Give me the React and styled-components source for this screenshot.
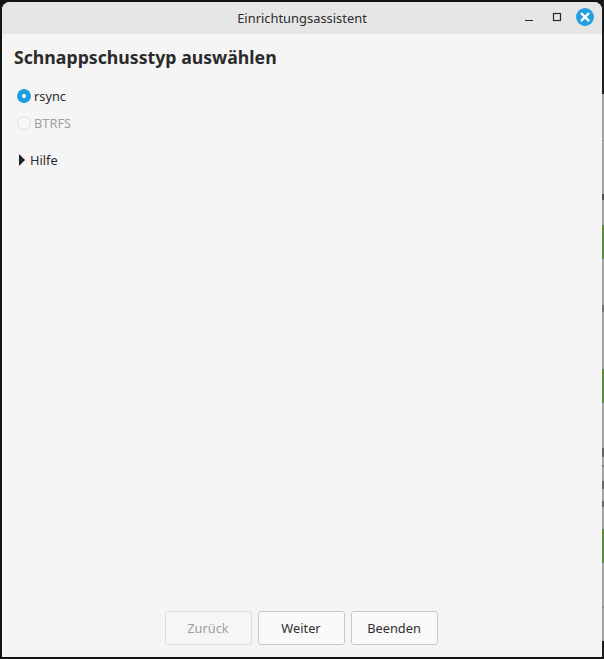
import React from "react";
import styled, { createGlobalStyle } from "styled-components";

const stripSegments = [
  { h: 94, c: "#1d1d1d" },
  { h: 46, c: "#a3a3a3" },
  { h: 1, c: "#8c8c8c" },
  { h: 53, c: "#a3a3a3" },
  { h: 6, c: "#555" },
  { h: 25, c: "#a3a3a3" },
  { h: 34, c: "#5b8f3c" },
  { h: 46, c: "#a3a3a3" },
  { h: 7, c: "#777" },
  { h: 57, c: "#a3a3a3" },
  { h: 34, c: "#5b8f3c" },
  { h: 45, c: "#a3a3a3" },
  { h: 9, c: "#666" },
  { h: 8, c: "#a3a3a3" },
  { h: 2, c: "#777" },
  { h: 14, c: "#a3a3a3" },
  { h: 8, c: "#666" },
  { h: 12, c: "#a3a3a3" },
  { h: 6, c: "#666" },
  { h: 22, c: "#a3a3a3" },
  { h: 34, c: "#5b8f3c" },
  { h: 43, c: "#a3a3a3" },
  { h: 2, c: "#8c8c8c" },
  { h: 33, c: "#a3a3a3" },
  { h: 18, c: "#1d1d1d" },
];

const App = () => {
  return (
    <Desktop>
      <GlobalStyle />
      <Window>
        <TitleBar>
          <WindowTitle>Einrichtungsassistent</WindowTitle>
          <WindowControls>
            <ControlButton aria-label="Minimieren">
              <svg width="10" height="10" viewBox="0 0 10 10">
                <path d="M1 8.5h8" stroke="#2a2a2a" strokeWidth="1.2" />
              </svg>
            </ControlButton>
            <ControlButton aria-label="Maximieren">
              <svg width="10" height="10" viewBox="0 0 10 10">
                <rect x="1.5" y="1.5" width="7" height="7" fill="none" stroke="#2a2a2a" strokeWidth="1.2" />
              </svg>
            </ControlButton>
            <CloseButton aria-label="Schliessen">
              <svg width="10" height="10" viewBox="0 0 10 10">
                <path d="M1.6 1.6l6.8 6.8M8.4 1.6l-6.8 6.8" stroke="#fff" strokeWidth="2.2" strokeLinecap="round" />
              </svg>
            </CloseButton>
          </WindowControls>
        </TitleBar>
        <Content>
          <Heading>Schnappschusstyp auswählen</Heading>
          <OptionList>
            <RadioRow>
              <Radio checked />
              <span>rsync</span>
            </RadioRow>
            <RadioRow disabled>
              <Radio disabled />
              <span>BTRFS</span>
            </RadioRow>
          </OptionList>
          <Expander>
            <Arrow />
            <span>Hilfe</span>
          </Expander>
        </Content>
        <ButtonBar>
          <WizardButton disabled>Zurück</WizardButton>
          <WizardButton>Weiter</WizardButton>
          <WizardButton>Beenden</WizardButton>
        </ButtonBar>
      </Window>
      <BackdropStrip>
        {stripSegments.map((seg, i) => (
          <StripSegment key={i} style={{ height: seg.h, background: seg.c }} />
        ))}
      </BackdropStrip>
    </Desktop>
  );
};

export default App;

const GlobalStyle = createGlobalStyle`
  html, body {
    margin: 0;
    padding: 0;
    background: #141414;
  }
  * {
    box-sizing: border-box;
  }
`;

const Desktop = styled.div`
  display: flex;
  width: 604px;
  height: 659px;
  padding-left: 2px;
  background: #141414;
  overflow: hidden;
  font-family: "Noto Sans", "Open Sans", sans-serif;
`;

const Window = styled.div`
  flex: 1;
  display: flex;
  flex-direction: column;
  margin: 2px 0;
  background: #f5f5f5;
  border-radius: 8px 8px 0 0;
  overflow: hidden;
`;

const TitleBar = styled.div`
  position: relative;
  flex: none;
  height: 32px;
  display: flex;
  align-items: center;
  justify-content: center;
  background: #e6e6e6;
`;

const WindowTitle = styled.div`
  font-size: 12.9px;
  color: #2d2d2d;
`;

const WindowControls = styled.div`
  position: absolute;
  top: 3px;
  right: 8px;
  display: flex;
  align-items: center;
  gap: 10px;
`;

const ControlButton = styled.div`
  width: 18px;
  height: 24px;
  display: flex;
  align-items: center;
  justify-content: center;
`;

const CloseButton = styled.div`
  width: 18px;
  height: 18px;
  border-radius: 50%;
  background: #24a0e0;
  display: flex;
  align-items: center;
  justify-content: center;
`;

const Content = styled.div`
  flex: 1;
  padding: 11px 12px 0;
`;

const Heading = styled.h1`
  margin: 0;
  font-size: 17.7px;
  line-height: 24px;
  font-weight: 700;
  color: #2b2b2b;
`;

const OptionList = styled.div`
  display: flex;
  flex-direction: column;
  gap: 7px;
  margin-top: 17px;
  padding-left: 3px;
`;

const RadioRow = styled.div`
  display: flex;
  align-items: center;
  gap: 3px;
  height: 20px;
  font-size: 12.8px;
  color: ${(props) => (props.disabled ? "#a0a0a0" : "#2b2b2b")};
`;

const Radio = styled.div`
  width: 14px;
  height: 14px;
  border-radius: 50%;
  display: flex;
  align-items: center;
  justify-content: center;
  background: ${(props) => (props.checked ? "#1f9ede" : "#f7f7f7")};
  border: ${(props) => (props.checked ? "none" : "1px solid #e0e0e0")};
  &::after {
    content: "";
    display: ${(props) => (props.checked ? "block" : "none")};
    width: 4px;
    height: 4px;
    border-radius: 50%;
    background: #fff;
  }
`;

const Expander = styled.div`
  display: flex;
  align-items: center;
  gap: 5px;
  height: 20px;
  margin-top: 17px;
  padding-left: 5px;
  font-size: 12.8px;
  color: #2b2b2b;
`;

const Arrow = styled.div`
  width: 0;
  height: 0;
  border-style: solid;
  border-width: 6px 0 6px 6px;
  border-color: transparent transparent transparent #222;
`;

const ButtonBar = styled.div`
  flex: none;
  display: flex;
  justify-content: center;
  gap: 6px;
  padding-bottom: 12px;
  padding-right: 2px;
`;

const WizardButton = styled.div`
  width: 87px;
  height: 34px;
  display: flex;
  align-items: center;
  justify-content: center;
  font-size: 12.8px;
  border-radius: 3px;
  background: ${(props) => (props.disabled ? "#f6f6f6" : "#f9f9f9")};
  border: 1px solid ${(props) => (props.disabled ? "#dedede" : "#c9c9c9")};
  color: ${(props) => (props.disabled ? "#a0a0a0" : "#2f2f2f")};
`;

const BackdropStrip = styled.div`
  flex: none;
  width: 2px;
  display: flex;
  flex-direction: column;
`;

const StripSegment = styled.div`
  flex: none;
  width: 100%;
`;
